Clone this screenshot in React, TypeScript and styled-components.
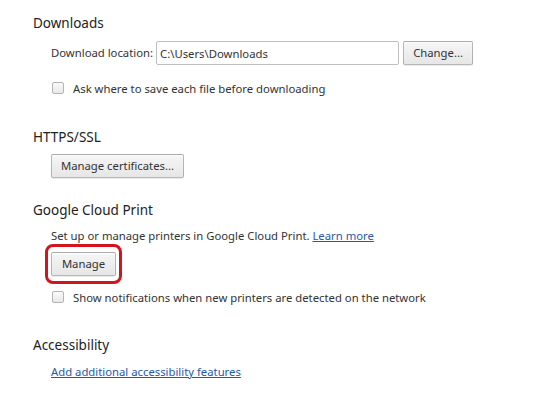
import React from "react";
import styled, { createGlobalStyle } from "styled-components";

const Global = createGlobalStyle`
  html, body { margin: 0; padding: 0; background: #ffffff; }
  body {
    font-family: "Noto Sans", "Open Sans", "Liberation Sans", sans-serif;
    color: #333333;
    font-size: 11.3px;
  }
`;

const Page = styled.div`
  width: 556px;
  height: 396px;
  box-sizing: border-box;
  padding: 13px 0 0 33px;
  display: flex;
  flex-direction: column;
`;

const Section = styled.section<{ $after: number }>`
  display: flex;
  flex-direction: column;
  margin-bottom: ${(p) => p.$after}px;
`;

const Heading = styled.h3`
  margin: 0;
  font-size: 13.5px;
  font-weight: 400;
  line-height: 20px;
  height: 20px;
  color: #222222;
`;

const Body = styled.div<{ $top: number; $gap: number }>`
  display: flex;
  flex-direction: column;
  align-items: flex-start;
  padding-left: 18px;
  margin-top: ${(p) => p.$top}px;
  gap: ${(p) => p.$gap}px;
`;

const Row = styled.div`
  display: flex;
  align-items: center;
  height: 24px;
`;

const Label = styled.span`
  font-size: 11.3px;
  line-height: 18px;
  margin-right: 3px;
  color: #333333;
  white-space: nowrap;
`;

const PathInput = styled.input`
  box-sizing: border-box;
  width: 243px;
  height: 24px;
  border: 1px solid #bfbfbf;
  border-radius: 2px;
  padding: 0 3px;
  font-family: inherit;
  font-size: 11.3px;
  color: #333333;
  background: #ffffff;
  margin-right: 4px;
  outline: none;
`;

const Button = styled.button<{ $w?: number }>`
  box-sizing: border-box;
  height: 24px;
  ${(p) => (p.$w ? `width: ${p.$w}px;` : "")}
  padding: 0 6px;
  white-space: nowrap;
  border: 1px solid rgba(0, 0, 0, 0.25);
  border-radius: 2px;
  background: linear-gradient(#f6f6f6, #e6e6e6);
  box-shadow: 0 1px 0 rgba(0, 0, 0, 0.08), inset 0 1px 2px rgba(255, 255, 255, 0.75);
  font-family: inherit;
  font-size: 11.3px;
  color: #333333;
  line-height: 20px;
  cursor: pointer;
`;

const Highlight = styled.span`
  position: relative;
  display: inline-flex;
  &::after {
    content: "";
    position: absolute;
    left: -6px;
    right: -6px;
    top: -8px;
    bottom: -8px;
    border: 3px solid #d3141c;
    border-radius: 8px;
    pointer-events: none;
  }
`;

const CheckRow = styled.label<{ $top?: number }>`
  display: flex;
  align-items: center;
  height: 20px;
  gap: 9px;
  margin-top: ${(p) => p.$top ?? 0}px;
  font-size: 11.3px;
  color: #333333;
  white-space: nowrap;
`;

const Box = styled.span`
  box-sizing: border-box;
  width: 12px;
  height: 12px;
  margin-left: 1px;
  border: 1px solid #b4b4b4;
  border-radius: 2px;
  background: linear-gradient(#fafafa, #e8e8e8);
`;

const Text = styled.p`
  margin: 0;
  font-size: 11.3px;
  line-height: 18px;
  color: #333333;
  white-space: nowrap;
`;

const Link = styled.a`
  color: #2659a8;
  text-decoration: underline;
  font-size: 11.3px;
  line-height: 18px;
  cursor: pointer;
`;

export default function App() {
  return (
    <>
      <Global />
      <Page>
        <Section $after={29}>
          <Heading>Downloads</Heading>
          <Body $top={8} $gap={13}>
            <Row>
              <Label>Download location:</Label>
              <PathInput readOnly value="C:\Users\Downloads" />
              <Button $w={70}>Change...</Button>
            </Row>
            <CheckRow>
              <Box />
              Ask where to save each file before downloading
            </CheckRow>
          </Body>
        </Section>

        <Section $after={22}>
          <Heading>HTTPS/SSL</Heading>
          <Body $top={7} $gap={0}>
            <Button $w={133}>Manage certificates...</Button>
          </Body>
        </Section>

        <Section $after={28}>
          <Heading>Google Cloud Print</Heading>
          <Body $top={7} $gap={7}>
            <Text>
              Set up or manage printers in Google Cloud Print. <Link>Learn more</Link>
            </Text>
            <Highlight>
              <Button $w={65}>Manage</Button>
            </Highlight>
            <CheckRow $top={4}>
              <Box />
              Show notifications when new printers are detected on the network
            </CheckRow>
          </Body>
        </Section>

        <Section $after={0}>
          <Heading>Accessibility</Heading>
          <Body $top={8} $gap={0}>
            <Link>Add additional accessibility features</Link>
          </Body>
        </Section>
      </Page>
    </>
  );
}
